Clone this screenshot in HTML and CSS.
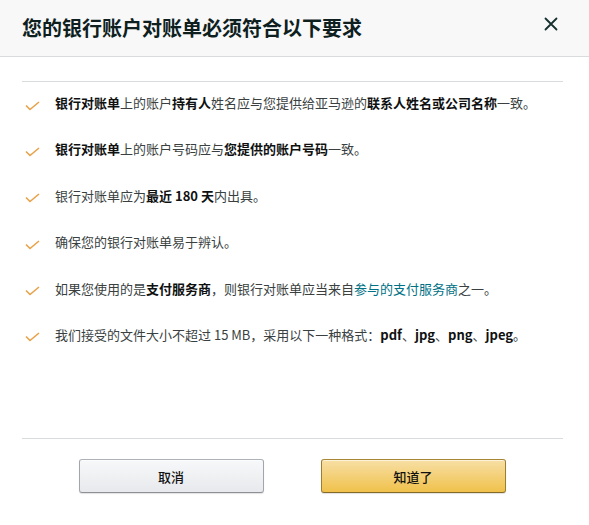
FILE: index.html
```html
<!DOCTYPE html>
<html lang="zh-CN">
<head>
<meta charset="utf-8">
<link rel="stylesheet" href="styles.css">
</head>
<body>
<div class="dialog">
  <header class="header">
    <h1 class="title">您的银行账户对账单必须符合以下要求</h1>
    <button class="close" aria-label="关闭">
      <svg width="14" height="14" viewBox="0 0 14 14"><path d="M1.5 1.5 L12.5 12.5 M12.5 1.5 L1.5 12.5" stroke="#16302f" stroke-width="1.8" stroke-linecap="round" fill="none"/></svg>
    </button>
  </header>
  <main class="content">
    <ul class="list">
      <li class="item"><span class="check"><svg width="15" height="10" viewBox="0 0 15 10"><path d="M1 4.5 L5 8.5 L14 1" stroke="#e8a24a" stroke-width="1.6" fill="none"/></svg></span><span class="text"><b>银行对账单</b>上的账户<b>持有人</b>姓名应与您提供给亚马逊的<b>联系人姓名或公司名称</b>一致。</span></li>
      <li class="item"><span class="check"><svg width="15" height="10" viewBox="0 0 15 10"><path d="M1 4.5 L5 8.5 L14 1" stroke="#e8a24a" stroke-width="1.6" fill="none"/></svg></span><span class="text"><b>银行对账单</b>上的账户号码应与<b>您提供的账户号码</b>一致。</span></li>
      <li class="item"><span class="check"><svg width="15" height="10" viewBox="0 0 15 10"><path d="M1 4.5 L5 8.5 L14 1" stroke="#e8a24a" stroke-width="1.6" fill="none"/></svg></span><span class="text">银行对账单应为<b>最近 180 天</b>内出具。</span></li>
      <li class="item"><span class="check"><svg width="15" height="10" viewBox="0 0 15 10"><path d="M1 4.5 L5 8.5 L14 1" stroke="#e8a24a" stroke-width="1.6" fill="none"/></svg></span><span class="text">确保您的银行对账单易于辨认。</span></li>
      <li class="item"><span class="check"><svg width="15" height="10" viewBox="0 0 15 10"><path d="M1 4.5 L5 8.5 L14 1" stroke="#e8a24a" stroke-width="1.6" fill="none"/></svg></span><span class="text">如果您使用的是<b>支付服务商</b>，则银行对账单应当来自<a class="link" href="#">参与的支付服务商</a>之一。</span></li>
      <li class="item"><span class="check"><svg width="15" height="10" viewBox="0 0 15 10"><path d="M1 4.5 L5 8.5 L14 1" stroke="#e8a24a" stroke-width="1.6" fill="none"/></svg></span><span class="text">我们接受的文件大小不超过 15 MB，采用以下一种格式：<b>pdf</b>、<b>jpg</b>、<b>png</b>、<b>jpeg</b>。</span></li>
    </ul>
  </main>
  <footer class="footer">
    <button class="btn btn-cancel">取消</button>
    <button class="btn btn-ok">知道了</button>
  </footer>
</div>
</body>
</html>
```
FILE: styles.css
```css
* { box-sizing: border-box; }
html, body { margin: 0; padding: 0; background: #fff; }
body {
  width: 589px;
  height: 525px;
  font-family: "Noto Sans CJK SC", "Noto Sans", sans-serif;
  color: #333;
  overflow: hidden;
}
.dialog { width: 589px; }
.header {
  height: 57px;
  background: #f8f8f8;
  border-bottom: 1px solid #d8dcdc;
  display: flex;
  align-items: center;
  justify-content: space-between;
  padding: 0 31px 2px 22px;
}
.title {
  margin: 0;
  font-size: 20px;
  font-weight: 700;
  color: #0f1f1f;
  letter-spacing: 0;
}
.close {
  border: 0;
  background: transparent;
  padding: 0;
  width: 14px;
  height: 14px;
  display: flex;
  margin-bottom: 6px;
}
.content {
  margin: 24px 26px 0 22px;
  border-top: 1px solid #d8dcdc;
  border-bottom: 1px solid #d8dcdc;
  height: 358px;
}
.list {
  list-style: none;
  margin: 0;
  padding: 11px 0 0 0;
  display: flex;
  flex-direction: column;
  gap: 26.4px;
}
.item {
  display: flex;
  align-items: center;
  height: 20px;
  font-size: 13px;
  line-height: 20px;
}
.check {
  width: 33px;
  padding-left: 3px;
  display: flex;
  padding-top: 5px;
}
.text { color: #3a3f3f; white-space: nowrap; }
.text b { color: #0f1111; font-weight: 700; }
.link { color: #007185; text-decoration: none; }
.footer {
  display: flex;
  justify-content: center;
  gap: 57px;
  padding: 20px 0 0 0;
  margin-left: -5px;
}
.btn {
  width: 185px;
  height: 34px;
  border-radius: 3px;
  font-family: "Noto Sans CJK SC", "Noto Sans", sans-serif;
  font-size: 13px;
  font-weight: 500;
  color: #111;
  cursor: pointer;
  box-shadow: 0 1px 0 rgba(255,255,255,.6) inset, 0 1px 1px rgba(0,0,0,.12);
}
.btn-cancel {
  background: linear-gradient(to bottom, #f7f8fa, #e7e9ec);
  border: 1px solid #adb1b8;
  border-color: #adb1b8 #a2a6ac #8d9096;
}
.btn-ok {
  background: linear-gradient(to bottom, #f7dfa5, #f0c14b);
  border: 1px solid #a88734;
  border-color: #a88734 #9c7e31 #846a29;
}
```
